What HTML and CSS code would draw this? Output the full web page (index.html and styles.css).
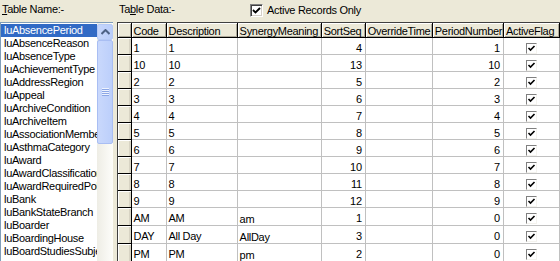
FILE: index.html
```html
<!DOCTYPE html>
<html>
<head>
<meta charset="utf-8">
<link rel="stylesheet" href="styles.css">
</head>
<body>
<div class="app">
  <div class="left">
    <div class="label"><u>T</u>able Name:-</div>
    <div class="listbox">
      <ul class="items">
        <li class="sel">luAbsencePeriod</li>
        <li>luAbsenceReason</li>
        <li>luAbsenceType</li>
        <li>luAchievementType</li>
        <li>luAddressRegion</li>
        <li>luAppeal</li>
        <li>luArchiveCondition</li>
        <li>luArchiveItem</li>
        <li>luAssociationMember</li>
        <li>luAsthmaCategory</li>
        <li>luAward</li>
        <li>luAwardClassification</li>
        <li>luAwardRequiredPolicy</li>
        <li>luBank</li>
        <li>luBankStateBranch</li>
        <li>luBoarder</li>
        <li>luBoardingHouse</li>
        <li>luBoardStudiesSubject</li>
      </ul>
      <div class="vscroll">
        <div class="sbtn"><svg width="9" height="6" viewBox="0 0 9 6"><path d="M0.5 5 L4.5 1 L8.5 5" fill="none" stroke="#4d6185" stroke-width="2"/></svg></div>
        <div class="thumb"><div class="grip"></div></div>
      </div>
    </div>
  </div>
  <div class="right">
    <div class="toolbar">
      <span class="label">Ta<u>b</u>le Data:-</span>
      <span class="chk"><span class="box"><svg width="9" height="9" viewBox="0 0 9 9"><path d="M1 4 L3.5 6.5 L8 2" fill="none" stroke="#000" stroke-width="1.8"/></svg></span>Active Records Only</span>
    </div>
    <div class="grid">
      <table>
        <colgroup>
          <col class="c-ind"><col class="c-code"><col class="c-desc"><col class="c-syn"><col class="c-sort"><col class="c-ovr"><col class="c-per"><col class="c-flag">
        </colgroup>
        <thead>
          <tr><th class="ind"></th><th>Code</th><th>Description</th><th>SynergyMeaning</th><th>SortSeq</th><th>OverrideTime</th><th>PeriodNumber</th><th>ActiveFlag</th></tr>
        </thead>
        <tbody>
          <tr><td class="ind"></td><td>1</td><td>1</td><td class="syn"></td><td class="num">4</td><td></td><td class="num">1</td><td class="flag"><span class="cb"></span></td></tr>
          <tr><td class="ind"></td><td>10</td><td>10</td><td class="syn"></td><td class="num">13</td><td></td><td class="num">10</td><td class="flag"><span class="cb"></span></td></tr>
          <tr><td class="ind"></td><td>2</td><td>2</td><td class="syn"></td><td class="num">5</td><td></td><td class="num">2</td><td class="flag"><span class="cb"></span></td></tr>
          <tr><td class="ind"></td><td>3</td><td>3</td><td class="syn"></td><td class="num">6</td><td></td><td class="num">3</td><td class="flag"><span class="cb"></span></td></tr>
          <tr><td class="ind"></td><td>4</td><td>4</td><td class="syn"></td><td class="num">7</td><td></td><td class="num">4</td><td class="flag"><span class="cb"></span></td></tr>
          <tr><td class="ind"></td><td>5</td><td>5</td><td class="syn"></td><td class="num">8</td><td></td><td class="num">5</td><td class="flag"><span class="cb"></span></td></tr>
          <tr><td class="ind"></td><td>6</td><td>6</td><td class="syn"></td><td class="num">9</td><td></td><td class="num">6</td><td class="flag"><span class="cb"></span></td></tr>
          <tr><td class="ind"></td><td>7</td><td>7</td><td class="syn"></td><td class="num">10</td><td></td><td class="num">7</td><td class="flag"><span class="cb"></span></td></tr>
          <tr><td class="ind"></td><td>8</td><td>8</td><td class="syn"></td><td class="num">11</td><td></td><td class="num">8</td><td class="flag"><span class="cb"></span></td></tr>
          <tr><td class="ind"></td><td>9</td><td>9</td><td class="syn"></td><td class="num">12</td><td></td><td class="num">9</td><td class="flag"><span class="cb"></span></td></tr>
          <tr><td class="ind"></td><td>AM</td><td>AM</td><td class="syn">am</td><td class="num">1</td><td></td><td class="num">0</td><td class="flag"><span class="cb"></span></td></tr>
          <tr><td class="ind"></td><td>DAY</td><td>All Day</td><td class="syn">AllDay</td><td class="num">3</td><td></td><td class="num">0</td><td class="flag"><span class="cb"></span></td></tr>
          <tr><td class="ind"></td><td>PM</td><td>PM</td><td class="syn">pm</td><td class="num">2</td><td></td><td class="num">0</td><td class="flag"><span class="cb"></span></td></tr>
        </tbody>
      </table>
    </div>
  </div>
</div>
</body>
</html>
```

FILE: styles.css
```css
* { box-sizing: border-box; }
html, body { margin: 0; padding: 0; }
body {
  background: #ece9d8;
  font-family: "Liberation Sans", Arial, sans-serif;
  font-size: 11px;
  letter-spacing: -0.3px;
  color: #000;
  width: 560px;
  height: 261px;
  overflow: hidden;
}
.app {
  display: flex;
  gap: 4px;
  height: 261px;
}
.left {
  width: 113px;
  flex: none;
  display: flex;
  flex-direction: column;
}
.label {
  height: 22px;
  padding: 3px 0 0 2px;
  line-height: 13px;
  white-space: nowrap;
}
.listbox {
  flex: 1;
  display: flex;
  background: #fff;
  border-top: 1px solid #7f9db9;
  border-left: 1px solid #7f9db9;
  overflow: hidden;
}
.items {
  list-style: none;
  margin: 0;
  padding: 1px 0 0 0;
  flex: 1;
  min-width: 0;
  overflow: hidden;
}
.items li {
  height: 13px;
  line-height: 13px;
  padding-left: 3px;
  white-space: nowrap;
  overflow: hidden;
}
.items li.sel {
  background: #316ac5;
  color: #fff;
}
.vscroll {
  width: 16px;
  flex: none;
  background: linear-gradient(to right, #eeede5, #fdfdfa);
  padding-top: 1px;
}
.sbtn {
  height: 16px;
  border: 1px solid #b6caf6;
  border-radius: 2px;
  background: linear-gradient(to right, #c6d6fc, #b9cdfa);
  display: flex;
  align-items: center;
  justify-content: center;
}
.thumb {
  height: 104px;
  border: 1px solid #a9bef3;
  border-radius: 2px;
  background: linear-gradient(to right, #c9d8fc, #bccffb);
  display: flex;
  align-items: center;
  justify-content: center;
}
.grip {
  width: 7px;
  height: 8px;
  background: repeating-linear-gradient(to bottom, #eef3fe 0 1px, #8ca7e6 1px 2px);
}
.right {
  flex: 1;
  display: flex;
  flex-direction: column;
  min-width: 0;
}
.toolbar {
  height: 22px;
  display: flex;
  align-items: flex-start;
}
.toolbar .label {
  width: 133px;
  padding-left: 2px;
}
.chk {
  display: flex;
  align-items: center;
  gap: 4px;
  margin-top: 4px;
  line-height: 13px;
}
.box {
  width: 13px;
  height: 13px;
  background: #fff;
  border-top: 1px solid #808080;
  border-left: 1px solid #808080;
  border-right: 1px solid #fff;
  border-bottom: 1px solid #fff;
  box-shadow: inset 1px 1px 0 #404040, inset -1px -1px 0 #d4d0c8;
  display: flex;
  align-items: center;
  justify-content: center;
}
.grid {
  flex: 1;
  background: #fff;
  border-top: 1px solid #404040;
  border-left: 1px solid #404040;
  overflow: hidden;
}
table {
  border-collapse: collapse;
  table-layout: fixed;
  width: 442px;
}
.c-ind { width: 13px; }
.c-code { width: 35px; }
.c-desc { width: 71px; }
.c-syn { width: 84px; }
.c-sort { width: 44px; }
.c-ovr { width: 67px; }
.c-per { width: 71px; }
.c-flag { width: 56px; }
th {
  background: #ece9d8;
  font-weight: normal;
  text-align: left;
  height: 14px;
  padding: 2px 0 0 2px;
  line-height: 12px;
  border-right: 1px solid #000;
  border-bottom: 1px solid #000;
  box-shadow: inset 1px 1px 0 #fff, inset -1px -1px 0 #aca899;
  white-space: nowrap;
  overflow: hidden;
  vertical-align: top;
}
td {
  height: 17px;
  padding: 5px 0 0 2px;
  line-height: 11px;
  border-right: 1px solid #c0c0c0;
  border-bottom: 1px solid #c0c0c0;
  white-space: nowrap;
  overflow: hidden;
  vertical-align: top;
}
td.ind {
  background: #ece9d8;
  border-right: 1px solid #000;
  border-bottom: 1px solid #000;
  box-shadow: inset 1px 1px 0 #fff, inset -2px 0 0 #d8d4c4;
  padding: 0;
}
td.num {
  text-align: right;
  padding-right: 3px;
}
td.syn { padding-top: 6px; }
td.flag {
  text-align: center;
  padding: 5px 0 0 0;
}
.cb {
  display: inline-block;
  width: 11px;
  height: 11px;
  vertical-align: top;
  border-top: 1px solid #808080;
  border-left: 1px solid #808080;
  border-right: 1px solid #f4f3ee;
  border-bottom: 1px solid #f4f3ee;
  background: #fff url("data:image/svg+xml,%3Csvg xmlns='http://www.w3.org/2000/svg' width='9' height='9' viewBox='0 0 9 9'%3E%3Cpath d='M1.5 4 L3.5 6 L7.5 2' fill='none' stroke='%23000' stroke-width='1.6'/%3E%3C/svg%3E") no-repeat center;
}
```
